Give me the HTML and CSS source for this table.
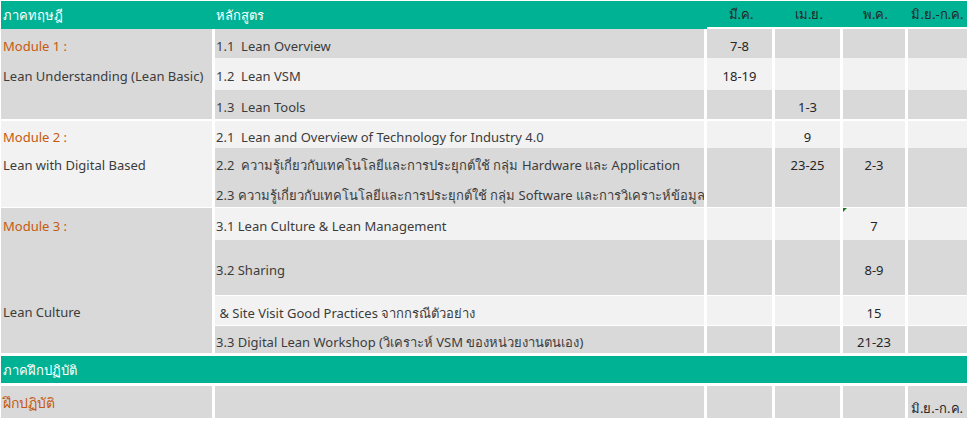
FILE: index.html
```html
<!DOCTYPE html>
<html lang="th">
<head>
<meta charset="utf-8">
<title>Lean Program</title>
<link rel="stylesheet" href="styles.css">
</head>
<body>
<table class="sheet">
  <colgroup>
    <col class="w1"><col class="w2"><col class="w3"><col class="w4"><col class="w5"><col class="w6">
  </colgroup>
  <tr class="hdr h28">
    <td class="c1">ภาคทฤษฎี</td>
    <td class="c2">หลักสูตร</td>
    <td class="m">มี.ค.</td>
    <td class="m">เม.ย.</td>
    <td class="m">พ.ค.</td>
    <td class="m last">มิ.ย.-ก.ค.</td>
  </tr>
  <tr class="h29">
    <td class="c1 dk mod">Module 1 :</td>
    <td class="c2 dk">1.1&nbsp; Lean Overview</td>
    <td class="m dk">7-8</td>
    <td class="m dk"></td>
    <td class="m dk"></td>
    <td class="m dk last"></td>
  </tr>
  <tr class="h32">
    <td class="c1 dk">Lean Understanding (Lean Basic)</td>
    <td class="c2 lt">1.2&nbsp; Lean VSM</td>
    <td class="m lt">18-19</td>
    <td class="m lt"></td>
    <td class="m lt"></td>
    <td class="m lt last"></td>
  </tr>
  <tr class="h29">
    <td class="c1 dk"></td>
    <td class="c2 dk">1.3&nbsp; Lean Tools</td>
    <td class="m dk"></td>
    <td class="m dk">1-3</td>
    <td class="m dk"></td>
    <td class="m dk last"></td>
  </tr>
  <tr class="h29 sep">
    <td class="c1 lt mod">Module 2 :</td>
    <td class="c2 lt">2.1&nbsp; Lean and Overview of Technology for Industry 4.0</td>
    <td class="m lt"></td>
    <td class="m lt">9</td>
    <td class="m lt"></td>
    <td class="m lt last"></td>
  </tr>
  <tr class="h30">
    <td class="c1 lt">Lean with Digital Based</td>
    <td class="c2 dk">2.2&nbsp; ความรู้เกี่ยวกับเทคโนโลยีและการประยุกต์ใช้ กลุ่ม Hardware และ Application</td>
    <td class="m dk"></td>
    <td class="m dk">23-25</td>
    <td class="m dk">2-3</td>
    <td class="m dk last"></td>
  </tr>
  <tr class="h29">
    <td class="c1 lt"></td>
    <td class="c2 dk">2.3 ความรู้เกี่ยวกับเทคโนโลยีและการประยุกต์ใช้ กลุ่ม Software และการวิเคราะห์ข้อมูล</td>
    <td class="m dk"></td>
    <td class="m dk"></td>
    <td class="m dk"></td>
    <td class="m dk last"></td>
  </tr>
  <tr class="h33 sep1">
    <td class="c1 dk mod">Module 3 :</td>
    <td class="c2 lt">3.1 Lean Culture &amp; Lean Management</td>
    <td class="m lt"></td>
    <td class="m lt"></td>
    <td class="m lt note">7</td>
    <td class="m lt last"></td>
  </tr>
  <tr class="h55">
    <td class="c1 dk"></td>
    <td class="c2 dk">3.2 Sharing</td>
    <td class="m dk"></td>
    <td class="m dk"></td>
    <td class="m dk">8-9</td>
    <td class="m dk last"></td>
  </tr>
  <tr class="h30 thin">
    <td class="c1 dk">Lean Culture</td>
    <td class="c2 lt">&nbsp;&amp; Site Visit Good Practices จากกรณีตัวอย่าง</td>
    <td class="m lt"></td>
    <td class="m lt"></td>
    <td class="m lt">15</td>
    <td class="m lt last"></td>
  </tr>
  <tr class="h28 thin">
    <td class="c1 dk"></td>
    <td class="c2 dk">3.3 Digital Lean Workshop (วิเคราะห์ VSM ของหน่วยงานตนเอง)</td>
    <td class="m dk"></td>
    <td class="m dk"></td>
    <td class="m dk">21-23</td>
    <td class="m dk last"></td>
  </tr>
  <tr class="hdr h30 sep3">
    <td class="c1" colspan="6">ภาคฝึกปฏิบัติ</td>
  </tr>
  <tr class="h35 sep3">
    <td class="c1 dk mod big">ฝึกปฏิบัติ</td>
    <td class="c2 dk"></td>
    <td class="m dk"></td>
    <td class="m dk"></td>
    <td class="m dk"></td>
    <td class="m dk last bottom">มิ.ย.-ก.ค.</td>
  </tr>
</table>
</body>
</html>
```

FILE: styles.css
```css
html, body {
  margin: 0;
  padding: 0;
  background: #ffffff;
}

body {
  font-family: "Noto Sans", "Open Sans", sans-serif;
  font-size: 13px;
  color: #3c3c3c;
}

.sheet {
  margin: 1px 0 0 1px;
  border-collapse: separate;
  border-spacing: 0;
  table-layout: fixed;
  width: 966px;
}

.w1 { width: 214px; }
.w2 { width: 492px; }
.w3 { width: 68px; }
.w4 { width: 68px; }
.w5 { width: 65px; }
.w6 { width: 59px; }

.sheet td {
  box-sizing: border-box;
  padding: 4px 0 0 0;
  vertical-align: middle;
  white-space: nowrap;
  overflow: hidden;
  border-right: 3px solid #ffffff;
  line-height: 16px;
}

.sheet td.last { border-right: 0; }

.h28 { height: 28px; }
.h29 { height: 29px; }
.h30 { height: 30px; }
.h32 { height: 32px; }
.h33 { height: 33px; }
.h35 { height: 35px; }
.h55 { height: 55px; }

.sheet td.c1 { padding-left: 2px; }
.sheet td.c2 { padding-left: 1px; }
.sheet td.m { text-align: center; color: #262626; }

.dk { background: #d9d9d9; }
.lt { background: #f2f2f2; }

.mod { color: #c55a11; }
.sheet td.big { font-size: 14px; padding-top: 2px; }

.hdr td {
  background: #00b294;
  color: #ffffff;
  border-right: 0;
  padding-top: 0;
}

.hdr td.m { border-bottom: 2px solid #ffffff; }

.sep td { border-top: 2px solid #ffffff; }
.sep1 td { border-top: 1px solid #ffffff; }
.thin td.c2, .thin td.m { border-top: 1px solid #ffffff; }
.sep3 td { border-top: 3px solid #ffffff; }

.note { position: relative; }
.note::before {
  content: "";
  position: absolute;
  left: 0;
  top: 0;
  border-top: 4px solid #1a7a1a;
  border-right: 4px solid transparent;
}

.sheet td.bottom {
  vertical-align: bottom;
  text-align: right;
  padding: 0 4px 2px 0;
}
```
